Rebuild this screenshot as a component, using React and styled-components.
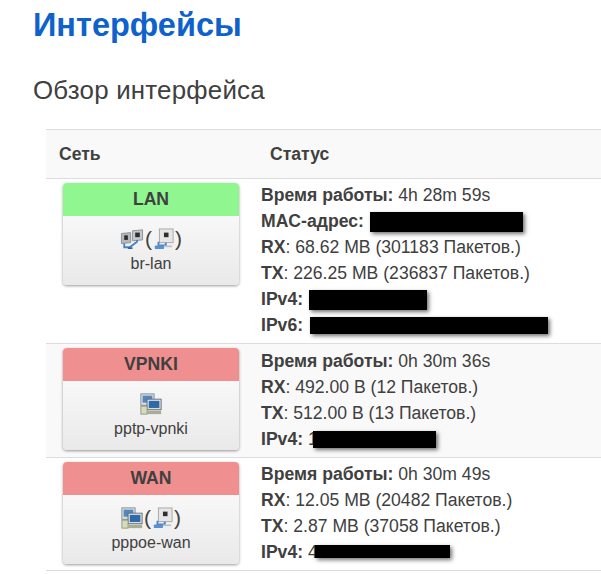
import React from 'react'
import styled, { createGlobalStyle } from 'styled-components'

const GlobalStyle = createGlobalStyle`
  html, body {
    margin: 0;
    padding: 0;
    background: #fff;
    overflow: hidden;
  }
  body {
    font-family: "Liberation Sans", Arial, sans-serif;
    color: #404040;
  }
`

const Page = styled.div`
  width: 601px;
  height: 574px;
  overflow: hidden;
  padding-left: 33px;
  box-sizing: border-box;
`

const Title = styled.h2`
  margin: 0;
  padding-top: 7px;
  font-size: 32.5px;
  line-height: 36px;
  font-weight: bold;
  color: #0f62cc;
`

const Subtitle = styled.h3`
  margin: 30px 0 0;
  font-size: 25.9px;
  line-height: 34px;
  font-weight: normal;
  color: #404040;
  letter-spacing: 0.2px;
`

const Table = styled.div`
  margin: 22px 0 0 13px;
  width: 555px;
  border-top: 1px solid #ddd;
`

const HeadRow = styled.div`
  display: flex;
  align-items: center;
  height: 48px;
  background: #f9f9f9;
  border-bottom: 1px solid #ddd;
  font-size: 17.6px;
  font-weight: bold;
`

const HeadCell = styled.div`
  width: ${p => p.$width}px;
  padding-left: ${p => p.$pad}px;
  box-sizing: border-box;
`

const Row = styled.div`
  display: flex;
  height: ${p => p.$height}px;
  background: ${p => (p.$striped ? '#f9f9f9' : '#fff')};
  border-bottom: 1px solid #ddd;
  box-sizing: border-box;
`

const NetCell = styled.div`
  width: 215px;
  padding: 4px 0 0 17px;
  box-sizing: border-box;
`

const Card = styled.div`
  width: 176px;
  border-radius: 4px;
  overflow: hidden;
  background: linear-gradient(#fff, #e9e9e9);
  box-shadow: 0 1px 3px rgba(0, 0, 0, 0.4);
`

const CardTitle = styled.div`
  height: 33px;
  line-height: 33px;
  text-align: center;
  font-size: 17.6px;
  font-weight: bold;
  color: #404040;
  background: ${p => (p.$up ? '#90f690' : '#f08f8f')};
`

const CardBody = styled.div`
  height: 69px;
  padding-top: 11px;
  box-sizing: border-box;
  text-align: center;
  font-size: 16px;
  color: #404040;
`

const Icons = styled.div`
  height: 24px;
  display: flex;
  align-items: center;
  justify-content: center;
  gap: 1px;
  font-size: 21px;
`

const Device = styled.div`
  margin-top: 2px;
  line-height: 22px;
`

const StatusCell = styled.div`
  padding-top: ${p => (p.$striped ? 4 : 3)}px;
  font-size: 17.6px;
  line-height: 26px;
`

const Line = styled.div`
  white-space: nowrap;
`

const Redact = styled.span`
  display: inline-block;
  vertical-align: top;
  margin: ${p => p.$top}px 0 0 ${p => p.$gap}px;
  width: ${p => p.$width}px;
  height: ${p => p.$height || 20}px;
  background: #000;
  box-shadow: 2px 2px 4px rgba(0, 0, 0, 0.55);
`

const Bridge = () => (
  <svg width="24" height="22" viewBox="0 0 25 24">
    <path d="M1 6l10-1v11l-10 1z" fill="#b4b8bd" stroke="#8b9097" />
    <path d="M13 3l11-1v11l-11 1z" fill="#c4c7cb" stroke="#8b9097" />
    <rect x="4" y="8" width="4" height="5" fill="#2e2e2e" />
    <rect x="16" y="5" width="5" height="5" fill="#2e2e2e" />
    <path d="M4 17v4h6l8-6v-2" fill="none" stroke="#4a82c6" strokeWidth="2" />
    <path d="M8 22h5" stroke="#2f63a8" strokeWidth="2" />
  </svg>
)

const Ethernet = () => (
  <svg width="21" height="22" viewBox="0 0 23 24">
    <rect x="7" y="1" width="15" height="15" fill="#e6e6e6" stroke="#a5a5a5" />
    <rect x="12" y="5" width="5" height="5" fill="#2e2e2e" />
    <path d="M14 16v3H6v-4" fill="none" stroke="#4a82c6" strokeWidth="2" />
    <rect x="2" y="19" width="10" height="4" rx="1" fill="#5a8fd0" />
    <rect x="12" y="19" width="9" height="2" fill="#b9c4cf" />
  </svg>
)

const Tunnel = () => (
  <svg width="22" height="22" viewBox="0 0 25 25">
    <rect x="1" y="1" width="15" height="13" fill="#d8dde2" stroke="#7f8790" />
    <rect x="3" y="3" width="11" height="8" fill="#5487bd" />
    <rect x="8" y="7" width="16" height="12" fill="#d8dde2" stroke="#5f6870" />
    <rect x="10" y="9" width="12" height="8" fill="#2f6aa8" />
    <rect x="1" y="15" width="7" height="9" fill="#d5dcb9" stroke="#8d9480" />
    <rect x="8" y="20" width="16" height="4" fill="#a8ad98" />
  </svg>
)

const networks = [
  {
    name: 'LAN',
    up: true,
    device: 'br-lan',
    height: 165,
    icons: (
      <Icons>
        <Bridge />
        <span>(</span>
        <Ethernet />
        <span>)</span>
      </Icons>
    ),
    lines: [
      <Line key="up"><b>Время работы:</b> 4h 28m 59s</Line>,
      <Line key="mac"><b>MAC-адрес:</b><Redact $gap={6} $top={4} $width={153} /></Line>,
      <Line key="rx"><b>RX</b>: 68.62 MB (301183 Пакетов.)</Line>,
      <Line key="tx"><b>TX</b>: 226.25 MB (236837 Пакетов.)</Line>,
      <Line key="v4"><b>IPv4:</b><Redact $gap={6} $top={4} $width={118} /></Line>,
      <Line key="v6"><b>IPv6:</b><Redact $gap={7} $top={5} $width={238} $height={17} /></Line>,
    ],
  },
  {
    name: 'VPNKI',
    striped: true,
    device: 'pptp-vpnki',
    height: 114,
    icons: (
      <Icons>
        <Tunnel />
      </Icons>
    ),
    lines: [
      <Line key="up"><b>Время работы:</b> 0h 30m 36s</Line>,
      <Line key="rx"><b>RX</b>: 492.00 B (12 Пакетов.)</Line>,
      <Line key="tx"><b>TX</b>: 512.00 B (13 Пакетов.)</Line>,
      <Line key="v4"><b>IPv4:</b> 1<Redact $gap={-5} $top={5} $height={17} $width={123} /></Line>,
    ],
  },
  {
    name: 'WAN',
    device: 'pppoe-wan',
    height: 113,
    icons: (
      <Icons>
        <Tunnel />
        <span>(</span>
        <Ethernet />
        <span>)</span>
      </Icons>
    ),
    lines: [
      <Line key="up"><b>Время работы:</b> 0h 30m 49s</Line>,
      <Line key="rx"><b>RX</b>: 12.05 MB (20482 Пакетов.)</Line>,
      <Line key="tx"><b>TX</b>: 2.87 MB (37058 Пакетов.)</Line>,
      <Line key="v4"><b>IPv4:</b> 4<Redact $gap={-3} $top={6} $height={13} $width={135} /></Line>,
    ],
  },
]

export default function App() {
  return (
    <Page>
      <GlobalStyle />
      <Title>Интерфейсы</Title>
      <Subtitle>Обзор интерфейса</Subtitle>
      <Table>
        <HeadRow>
          <HeadCell $width={224} $pad={13}>Сеть</HeadCell>
          <HeadCell $width={331} $pad={0}>Статус</HeadCell>
        </HeadRow>
        {networks.map(net => (
          <Row key={net.name} $height={net.height} $striped={net.striped}>
            <NetCell>
              <Card>
                <CardTitle $up={net.up}>{net.name}</CardTitle>
                <CardBody>
                  {net.icons}
                  <Device>{net.device}</Device>
                </CardBody>
              </Card>
            </NetCell>
            <StatusCell $striped={net.striped}>{net.lines}</StatusCell>
          </Row>
        ))}
      </Table>
    </Page>
  )
}
